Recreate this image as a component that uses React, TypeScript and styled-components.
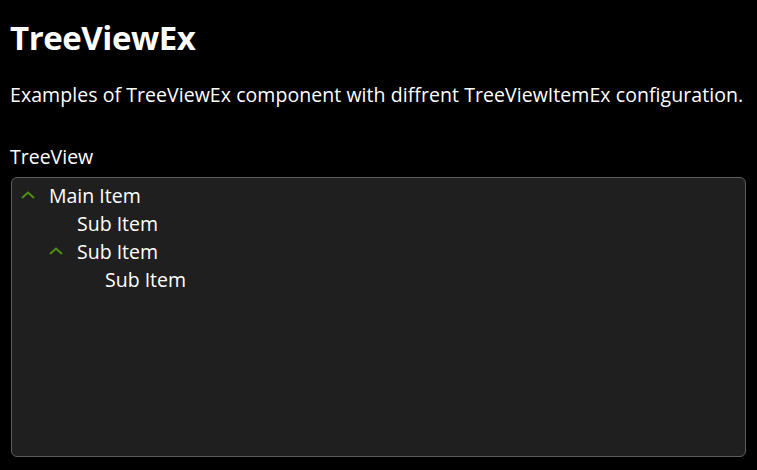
import styled, { createGlobalStyle } from "styled-components";

const GlobalStyle = createGlobalStyle`
  html, body {
    margin: 0;
    padding: 0;
    background: #000;
  }
  body {
    font-family: "Open Sans", "Noto Sans", sans-serif;
    color: #fff;
  }
`;

type Item = { label: string; level: number; expanded?: boolean };

const items: Item[] = [
  { label: "Main Item", level: 0, expanded: true },
  { label: "Sub Item", level: 1 },
  { label: "Sub Item", level: 1, expanded: true },
  { label: "Sub Item", level: 2 },
];

export default function App() {
  return (
    <>
      <GlobalStyle />
      <Page>
        <Title>TreeViewEx</Title>
        <Description>
          Examples of TreeViewEx component with diffrent TreeViewItemEx configuration.
        </Description>
        <Label>TreeView</Label>
        <TreeBox>
          {items.map((item, i) => (
            <Row key={i} $level={item.level}>
              <Chevron>
                {item.expanded && (
                  <svg width="14" height="8" viewBox="0 0 14 8">
                    <path d="M1 7 L7 1.5 L13 7" fill="none" stroke="#4f8f12" strokeWidth="2" />
                  </svg>
                )}
              </Chevron>
              <ItemText>{item.label}</ItemText>
            </Row>
          ))}
        </TreeBox>
      </Page>
    </>
  );
}

const Page = styled.div`
  padding: 14px 11px 12px 11px;
  display: flex;
  flex-direction: column;
`;

const Title = styled.h1`
  margin: 0 0 0 -1px;
  font-size: 33px;
  font-weight: 700;
  line-height: 48px;
  letter-spacing: -0.45px;
`;

const Description = styled.p`
  margin: 20px 0 0 -1px;
  font-size: 19.5px;
  line-height: 26px;
  letter-spacing: 0.06px;
  white-space: nowrap;
`;

const Label = styled.div`
  margin: 36px 0 0 -1px;
  font-size: 19.5px;
  line-height: 26px;
`;

const TreeBox = styled.div`
  margin-top: 7px;
  height: 280px;
  background: #1f1f1f;
  border: 1px solid #5c5c5c;
  border-radius: 6px;
  padding: 4px 0;
  box-sizing: border-box;
`;

const Row = styled.div<{ $level: number }>`
  display: flex;
  align-items: center;
  height: 28px;
  padding-left: ${(p) => 9 + p.$level * 28}px;
`;

const Chevron = styled.span`
  width: 28px;
  display: flex;
  align-items: center;
  padding-bottom: 2px;
`;

const ItemText = styled.span`
  font-size: 19.5px;
  line-height: 26px;
`;
